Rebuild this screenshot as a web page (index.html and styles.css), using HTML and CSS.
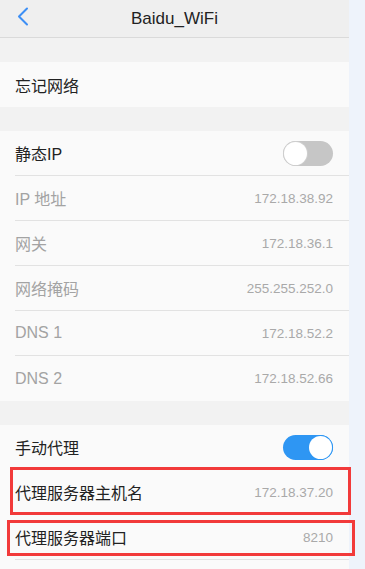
FILE: index.html
```html
<!DOCTYPE html>
<html lang="zh-CN">
<head>
  <meta charset="UTF-8">
  <meta name="viewport" content="width=device-width, initial-scale=1.0">
  <title>Baidu_WiFi</title>
  <link rel="stylesheet" href="styles.css">
</head>
<body>
  <div class="screen">
    <div class="topbar">
      <svg class="topbar__back" width="12" height="19" viewBox="0 0 12 19">
        <polyline points="10,1.5 2,9.5 10,17.5" fill="none" stroke="#3d8ff5" stroke-width="2" stroke-linecap="round" stroke-linejoin="round"/>
      </svg>
      <h1 class="topbar__title">Baidu_WiFi</h1>
    </div>

    <div class="group">
      <div class="row"><span class="row__label">忘记网络</span></div>
    </div>

    <div class="group">
      <div class="row">
        <span class="row__label">静态IP</span>
        <span class="switch"><span class="switch__knob"></span></span>
      </div>
      <div class="row row--muted"><span class="row__label">IP 地址</span><span class="row__value">172.18.38.92</span></div>
      <div class="row row--muted"><span class="row__label">网关</span><span class="row__value">172.18.36.1</span></div>
      <div class="row row--muted"><span class="row__label">网络掩码</span><span class="row__value">255.255.252.0</span></div>
      <div class="row row--muted"><span class="row__label">DNS 1</span><span class="row__value">172.18.52.2</span></div>
      <div class="row row--muted row--last"><span class="row__label">DNS 2</span><span class="row__value">172.18.52.66</span></div>
    </div>

    <div class="group">
      <div class="row">
        <span class="row__label">手动代理</span>
        <span class="switch switch--on"><span class="switch__knob"></span></span>
      </div>
      <div class="row">
        <span class="row__label">代理服务器主机名</span><span class="row__value">172.18.37.20</span>
        <span class="mark mark--host"></span>
      </div>
      <div class="row">
        <span class="row__label">代理服务器端口</span><span class="row__value">8210</span>
        <span class="mark mark--port"></span>
      </div>
      <div class="row row--cut"></div>
    </div>
  </div>
  <div class="edge"></div>
</body>
</html>
```

FILE: styles.css
```css
* {
  box-sizing: border-box;
}

html, body {
  margin: 0;
  padding: 0;
}

body {
  display: flex;
  width: 365px;
  height: 569px;
  overflow: hidden;
  background-color: #eef3fb;
  font-family: "Liberation Sans", "Noto Sans CJK SC", sans-serif;
}

.screen {
  width: 349px;
  flex-shrink: 0;
  background-color: #f2f2f2;
}

.edge {
  flex: 1;
  background-color: #eef3fb;
}

.topbar {
  height: 38px;
  position: relative;
  display: flex;
  align-items: center;
  justify-content: center;
  background-color: #efefef;
  border-bottom: 1px solid #dadada;
}

.topbar__back {
  position: absolute;
  left: 17px;
  top: 7px;
}

.topbar__title {
  margin: 0;
  font-size: 17px;
  font-weight: normal;
  color: #222;
}

.group {
  margin-top: 24px;
  background-color: #fafafa;
}

.row {
  height: 45px;
  margin-left: 15px;
  padding-right: 16px;
  position: relative;
  display: flex;
  align-items: center;
  justify-content: space-between;
  border-bottom: 1px solid #e2e2e2;
  font-size: 16px;
  color: #222;
}

.group .row:first-child:only-child,
.row--last {
  border-bottom: none;
}

.row--cut {
  height: 9px;
  border-bottom: none;
}

.row--muted .row__label {
  color: #a3a3a3;
}

.row__value {
  font-size: 13.5px;
  color: #a9a9a9;
}

.switch {
  width: 50px;
  height: 25px;
  border-radius: 13px;
  background-color: #c6c6c6;
  position: relative;
}

.switch__knob {
  position: absolute;
  top: 1px;
  left: 1px;
  width: 23px;
  height: 23px;
  border-radius: 50%;
  background-color: #fff;
  box-shadow: 0 0 0 1px #cfcfcf;
}

.switch--on {
  background-color: #2e96f3;
}

.switch--on .switch__knob {
  left: 26px;
  box-shadow: 0 0 0 1px #2e96f3;
}

.mark {
  position: absolute;
  border: 3px solid #f23a3a;
}

.mark--host {
  top: -3px;
  bottom: -1px;
  left: -5px;
  right: -2px;
}

.mark--port {
  top: 5px;
  bottom: 3px;
  left: -8px;
  right: -6px;
}
```
